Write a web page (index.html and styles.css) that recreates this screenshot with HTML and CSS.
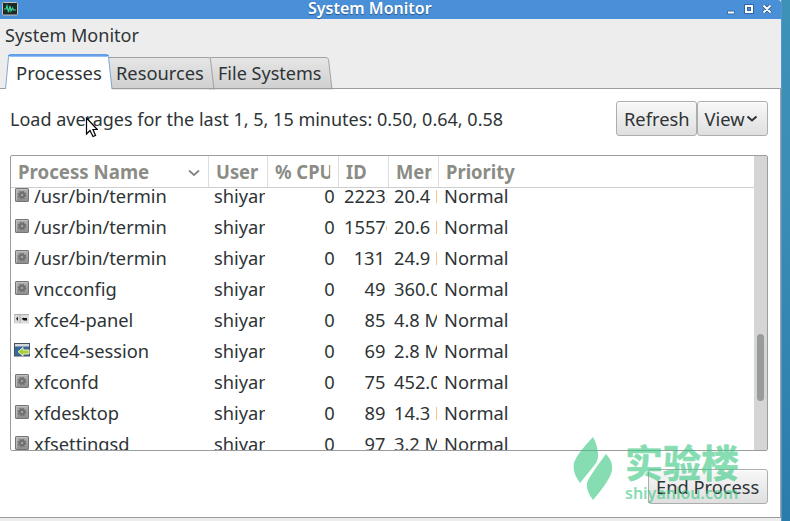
FILE: index.html
```html
<!DOCTYPE html>
<html lang="en">
<head>
<meta charset="utf-8">
<title>System Monitor</title>
<link rel="stylesheet" href="styles.css">
</head>
<body>
<svg class="defs" width="0" height="0">
  <defs>
    <linearGradient id="metal" x1="0" y1="0" x2="0" y2="1"><stop offset="0" stop-color="#b2b2b2"/><stop offset="1" stop-color="#8e8e8e"/></linearGradient>
    <linearGradient id="tabfill" x1="0" y1="0" x2="0" y2="1"><stop offset="0" stop-color="#e6e6e6"/><stop offset="1" stop-color="#cfcfcf"/></linearGradient>
    <symbol id="gear" viewBox="0 0 16 16">
      <rect x="1.500" y="1.500" width="13" height="13" rx=".6" fill="url(#metal)" stroke="#747474"/>
      <path d="M2.500 13.500V2.500H13.500" fill="none" stroke="#c4c4c4" stroke-width=".8"/>
      <circle cx="8" cy="8" r="2.300" fill="none" stroke="#707070" stroke-width="2"/>
      <circle cx="8" cy="8" r="3.600" fill="none" stroke="#707070" stroke-width="1.500" stroke-dasharray="1.5 1.33"/>
    </symbol>
    <symbol id="panel" viewBox="0 0 16 16">
      <rect x="0" y="3" width="15" height="9.500" fill="#dcdcdc"/>
      <path d="M0 12V3.500H15" fill="none" stroke="#b0b0b0"/>
      <path d="M4 5.500v4.500L2 7.700z" fill="#222"/><path d="M6 4v8" stroke="#aaa"/>
      <path d="M7.500 8l2-1.500V7H13v2.500H9.500V9z" fill="#111"/>
    </symbol>
    <symbol id="session" viewBox="0 0 16 16">
      <rect x=".5" y="1.500" width="15" height="12.500" fill="#3467a0" stroke="#46515d"/>
      <path d="M1 2h14v2.500H1z" fill="#d5d8d8"/>
      <path d="M4 9.700l5-4.200v2.500h6v4H9V14z" fill="#a9cf38" stroke="#f2f7d0" stroke-width=".9"/>
    </symbol>
  </defs>
</svg>
<div class="desktop">
  <main class="window">
    <header class="titlebar">
      <svg class="app-icon" width="16" height="14" viewBox="0 0 16 14"><rect x=".5" y=".5" width="15" height="12.500" rx="1" fill="#1d2b28" stroke="#c7c2bc"/><path d="M2 7h2l1-3 1.500 6L8 4l1 5 1.500-3 1 2H14" fill="none" stroke="#39d59b" stroke-width="1.200"/></svg>
      <span class="title">System Monitor</span>
      <svg class="controls" width="46" height="15" viewBox="0 0 46 15">
        <g fill="none" stroke="#28568a" stroke-width="3.600"><path d="M1.500 10.500h7M20 4h6v6h-6zM37.500 3.500l7 7M44.500 3.500l-7 7"/></g>
        <g fill="none" stroke="#fff" stroke-width="2"><path d="M2 10.500h6M20 4h6v6h-6zM37.500 3.500l7 7M44.500 3.500l-7 7"/></g>
      </svg>
    </header>
    <nav class="menubar"><span class="t menu">System Monitor</span></nav>
    <div class="tabs">
      <svg class="tab-shapes" width="782" height="36" viewBox="0 0 782 36">
        <path d="M210 35.500V3.500H326q2 0 2.500 2l3.500 30" fill="url(#tabfill)" stroke="#a0a3a3"/>
        <path d="M108 35.500V3.500H208q2 0 2.500 2l3.500 30" fill="url(#tabfill)" stroke="#a0a3a3"/>
        <path d="M0 34.500H782" stroke="#9a9d9d"/>
        <path d="M5 36L8.500 3Q9 1 11 1H106q2 0 2.500 2L112 36z" fill="#fff"/>
        <path d="M5.500 35L8.500 3M108.500 3L112 35" stroke="#7da7d4"/>
        <path d="M8.500 2.500q.5-1.500 2-1.500H106q2 0 2.500 1.500" fill="none" stroke="#3584e4" stroke-width="1.500"/>
        <path d="M10 2.500H107" stroke="#92c0f6"/>
      </svg>
      <span class="t tab tab-one">Processes</span><span class="t tab tab-two">Resources</span><span class="t tab tab-three">File Systems</span>
    </div>
    <section class="page">
      <div class="toolbar">
        <span class="t load">Load averages for the last 1, 5, 15 minutes: 0.50, 0.64, 0.58</span>
        <div class="buttons">
          <button class="btn refresh"><span class="t">Refresh</span></button>
          <button class="btn view"><span class="t">View</span><svg width="12" height="8" viewBox="0 0 12 8"><path d="M1.500 1.500L6 5.500l4.500-4" fill="none" stroke="#2e3436" stroke-width="2"/></svg></button>
        </div>
      </div>
      <div class="list">
        <div class="table">
          <div class="grid head">
            <div><span class="t">Process Name</span><svg width="12" height="8" viewBox="0 0 12 8"><path d="M1 1.500L6 6l5-4.500" fill="none" stroke="#85857f" stroke-width="1.700"/></svg></div>
            <div><span class="t">User</span></div><div><span class="t">% CPU</span></div><div><span class="t">ID</span></div><div><span class="t">Memory</span></div><div><span class="t">Priority</span></div>
          </div>
          <div class="rows">
            <div class="grid row"><div><svg><use href="#gear"/></svg><span class="t">/usr/bin/termin</span></div><div><span class="t">shiyanlou</span></div><div><span class="t">0</span></div><div class="long"><span class="t">22235</span></div><div><span class="t">20.4 MiB</span></div><div><span class="t">Normal</span></div></div>
            <div class="grid row"><div><svg><use href="#gear"/></svg><span class="t">/usr/bin/termin</span></div><div><span class="t">shiyanlou</span></div><div><span class="t">0</span></div><div class="long"><span class="t">15576</span></div><div><span class="t">20.6 MiB</span></div><div><span class="t">Normal</span></div></div>
            <div class="grid row"><div><svg><use href="#gear"/></svg><span class="t">/usr/bin/termin</span></div><div><span class="t">shiyanlou</span></div><div><span class="t">0</span></div><div><span class="t">131</span></div><div><span class="t">24.9 MiB</span></div><div><span class="t">Normal</span></div></div>
            <div class="grid row"><div><svg><use href="#gear"/></svg><span class="t">vncconfig</span></div><div><span class="t">shiyanlou</span></div><div><span class="t">0</span></div><div><span class="t">49</span></div><div><span class="t">360.0</span></div><div><span class="t">Normal</span></div></div>
            <div class="grid row"><div><svg><use href="#panel"/></svg><span class="t">xfce4-panel</span></div><div><span class="t">shiyanlou</span></div><div><span class="t">0</span></div><div><span class="t">85</span></div><div><span class="t">4.8 MiB</span></div><div><span class="t">Normal</span></div></div>
            <div class="grid row"><div><svg><use href="#session"/></svg><span class="t">xfce4-session</span></div><div><span class="t">shiyanlou</span></div><div><span class="t">0</span></div><div><span class="t">69</span></div><div><span class="t">2.8 MiB</span></div><div><span class="t">Normal</span></div></div>
            <div class="grid row"><div><svg><use href="#gear"/></svg><span class="t">xfconfd</span></div><div><span class="t">shiyanlou</span></div><div><span class="t">0</span></div><div><span class="t">75</span></div><div><span class="t">452.0</span></div><div><span class="t">Normal</span></div></div>
            <div class="grid row"><div><svg><use href="#gear"/></svg><span class="t">xfdesktop</span></div><div><span class="t">shiyanlou</span></div><div><span class="t">0</span></div><div><span class="t">89</span></div><div><span class="t">14.3 MiB</span></div><div><span class="t">Normal</span></div></div>
            <div class="grid row"><div><svg><use href="#gear"/></svg><span class="t">xfsettingsd</span></div><div><span class="t">shiyanlou</span></div><div><span class="t">0</span></div><div><span class="t">97</span></div><div><span class="t">3.2 MiB</span></div><div><span class="t">Normal</span></div></div>
          </div>
        </div>
        <div class="scroll"><div class="thumb"></div></div>
      </div>
      <footer class="actions"><button class="btn end"><span class="t">End Process</span></button></footer>
    </section>
    <div class="bottom"></div>
  </main>
</div>
<div class="watermark">
  <svg width="42" height="65" viewBox="0 0 42 65"><path d="M20 1Q24 8 25 17Q26 25 20 31L7 47Q-1 36 1 27Q3 19 20 1zM33 18Q40 25 39 34Q38 43 20 64Q13 55 14 47Q15 42 33 18z" fill="currentColor"/></svg>
  <div class="brand"><span class="cn">实验楼</span><span class="en">shiyanlou.com</span></div>
</div>
<svg class="cursor" width="13" height="22" viewBox="0 0 13 22"><path d="M1.500 1v16l3.500-3.500L8 19.500l2.500-1L8 12.500h4.300z" fill="#fff" stroke="#000" stroke-width="1.200"/></svg>
</body>
</html>
```
FILE: styles.css
```css
* { box-sizing: border-box; }
body {
  margin: 0; width: 790px; height: 521px; overflow: hidden; position: relative;
  font: 18.67px/24px "Noto Sans", "Open Sans", sans-serif; color: #2e3436;
}
.defs { position: absolute; }
.desktop { width: 790px; height: 521px; background: linear-gradient(#3d92b8, #3b8eb6 35%, #2a7cac); }
.window { width: 782px; height: 521px; background: #ededed; border-right: 1px solid #5d91c8; display: flex; flex-direction: column; }
.t { display: inline-block; white-space: pre; transform: scaleX(.98); transform-origin: 0 50%; }
.titlebar { height: 19px; flex: none; background: #4a90d9; display: flex; align-items: center; padding: 0 9px 0 2px; border-radius: 0 3px 0 0; }
.app-icon { margin-top: -2px; }
.title { margin-left: 290px; font-size: 16px; font-weight: 600; line-height: 22px; margin-top: -3px; color: #fff; white-space: pre; text-shadow: 0 1px 1px #285686; }
.controls { margin-left: auto; }
.menubar { height: 35px; flex: none; padding: 4px 5px; }
.tabs { height: 35px; flex: none; position: relative; display: flex; padding-top: 7px; }
.tab-shapes { position: absolute; left: 0; top: 0; }
.tab { position: relative; }
.tab-one { margin-left: 16px; width: 100px; transform: scaleX(.99); }
.tab-two { width: 102px; transform: scaleX(.98); }
.tab-three, .menu { transform: scaleX(.967); }
.page { height: 429px; flex: none; background: #fff; border-right: 1px solid #a0a3a3; border-bottom: 1px solid #9a9d9d; padding: 12px 12px 0 10px; }
.toolbar { display: flex; justify-content: space-between; height: 54px; }
.load { margin-top: 6px; width: 500px; transform: scaleX(.965); }
.buttons { display: flex; }
.btn { font: inherit; color: inherit; height: 35px; padding: 1px 0 0 7px; border: 1px solid #acaeae; border-radius: 3px; background: linear-gradient(#f8f8f8, #dfdfdf); display: flex; align-items: center; box-shadow: inset 0 1px #fff; }
.refresh { width: 81px; }
.view { width: 71px; padding-left: 6px; }
.view .t { width: 42px; }
.list { height: 296px; width: 758px; border: 1px solid #9a9d9d; border-radius: 2px; display: flex; overflow: hidden; }
.table { flex: 1; }
.grid { display: grid; grid-template-columns: 198px 59px 71px 50px 50px 1fr; }
.head { height: 32px; border-bottom: 1px solid #cfcfcf; font-weight: 700; color: #8b8c86; }
.head > div { padding: 4px 0 0 7px; border-right: 1px solid #dedede; overflow: hidden; display: flex; }
.head > div:last-child { border: 0; }
.head > div .t { flex: none; transform: scaleX(.985); }
.head > div:first-child .t { width: 169px; transform: scaleX(1); }
.head svg { margin: 9px 0 0 1px; flex: none; }
.head > div:nth-child(3) .t { width: 56px; overflow: hidden; }
.head > div:nth-child(5) .t { width: 36px; overflow: hidden; }
.rows { height: 262px; overflow: hidden; }
.row { height: 31px; transform: translateY(-8px); }
.row > div { display: flex; overflow: hidden; padding-top: 4px; }
.row .t { flex: none; }
.row svg { width: 16px; height: 16px; margin: 3px 4px 0 3px; flex: none; }
.row > div:nth-child(2) { padding-left: 5px; margin-right: 3px; }
.row > div:nth-child(3) { justify-content: flex-end; padding-right: 4.500px; }
.row > div:nth-child(3) .t, .row > div:nth-child(4) .t { transform-origin: 100% 50%; }
.row > div:nth-child(4) { justify-content: flex-end; padding-right: 2px; margin-right: 2px; padding-left: 5px; }
.row > .long:nth-child(4) { justify-content: flex-start; padding-right: 0; }
.row > .long:nth-child(4) .t { transform-origin: 0 50%; }
.row > div:nth-child(5) { padding-left: 4.500px; margin-right: 2px; }
.row > div:nth-child(6) { padding-left: 5px; }
.scroll { width: 13px; background: #d5d5d5; padding: 178px 0 0 3px; }
.thumb { width: 7px; height: 67px; border-radius: 4px; background: #989a9b; }
.actions { display: flex; justify-content: flex-end; padding-top: 18px; }
.end { width: 120px; }
.bottom { flex: 1; }
.watermark { position: absolute; left: 573px; top: 436px; color: #3ac883; opacity: .61; display: flex; }
.brand { display: flex; flex-direction: column; margin-left: 10px; }
.cn { font: 700 38px/48px "Noto Sans CJK SC", sans-serif; white-space: nowrap; margin-top: 1px; -webkit-text-stroke: .6px currentColor; }
.en { font: 600 16px/18px "Noto Sans", sans-serif; margin-top: -1px; }
.cursor { position: absolute; left: 85px; top: 117px; }
```
